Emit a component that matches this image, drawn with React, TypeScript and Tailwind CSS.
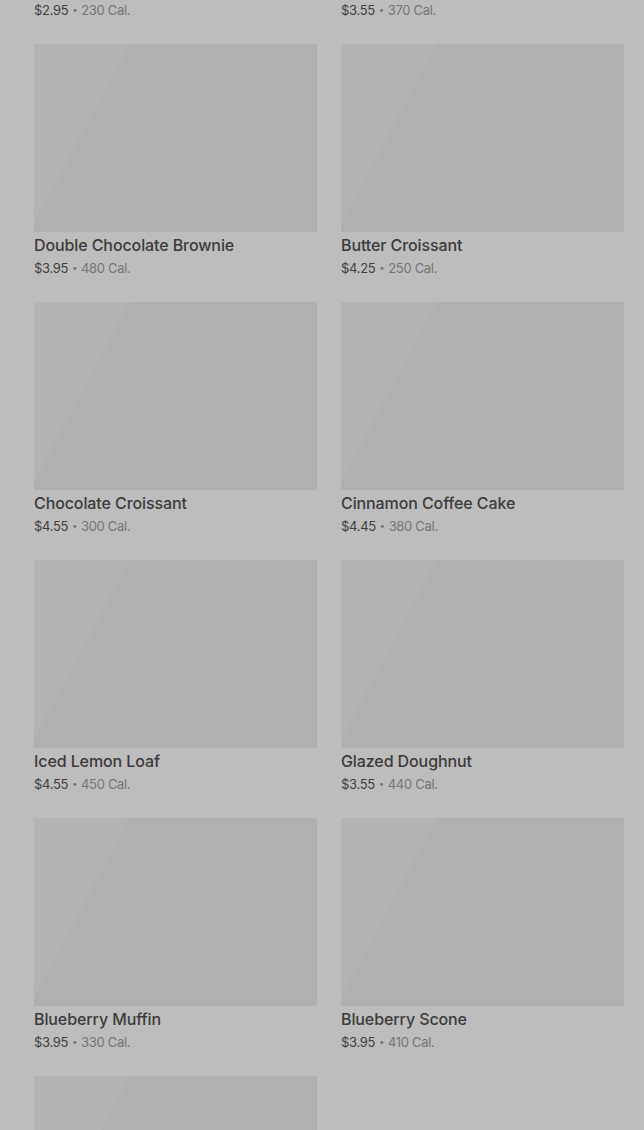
type Item = {
  name: string;
  price: string;
  cal: number;
};

const items: Item[] = [
  { name: "Plain Bagel", price: "$2.95", cal: 230 },
  { name: "Cheese Danish", price: "$3.55", cal: 370 },
  { name: "Double Chocolate Brownie", price: "$3.95", cal: 480 },
  { name: "Butter Croissant", price: "$4.25", cal: 250 },
  { name: "Chocolate Croissant", price: "$4.55", cal: 300 },
  { name: "Cinnamon Coffee Cake", price: "$4.45", cal: 380 },
  { name: "Iced Lemon Loaf", price: "$4.55", cal: 450 },
  { name: "Glazed Doughnut", price: "$3.55", cal: 440 },
  { name: "Blueberry Muffin", price: "$3.95", cal: 330 },
  { name: "Blueberry Scone", price: "$3.95", cal: 410 },
  { name: "Banana Nut Loaf", price: "$3.95", cal: 410 },
];

const ProductCard = ({ item }: { item: Item }) => {
  return (
    <div className="flex flex-col mb-6">
      <div className="h-[188px] w-full bg-[linear-gradient(118deg,#b4b4b4_25%,#b0b0b0_25%)]"></div>
      <div className="mt-px text-[16px] leading-6 font-medium text-[#3b3b3b] tracking-[-0.1px]">
        {item.name}
      </div>
      <div className="mt-px flex items-center text-[13px] leading-5 tracking-[-0.3px]">
        <span className="text-[#3e3e3e]">{item.price}</span>
        <span className="mx-[4px] text-[9px] text-[#727272]">•</span>
        <span className="text-[#757575]">{item.cal} Cal.</span>
      </div>
    </div>
  );
};

export default function App() {
  return (
    <div
      className="w-full h-[1130px] overflow-hidden bg-[#bdbdbd]"
      style={{ fontFamily: "Inter, 'Noto Sans', sans-serif" }}
    >
      <div className="grid grid-cols-2 gap-x-6 pl-[34px] pr-5 mt-[-214px]">
        {items.map((item) => (
          <ProductCard key={item.name} item={item} />
        ))}
      </div>
    </div>
  );
}
